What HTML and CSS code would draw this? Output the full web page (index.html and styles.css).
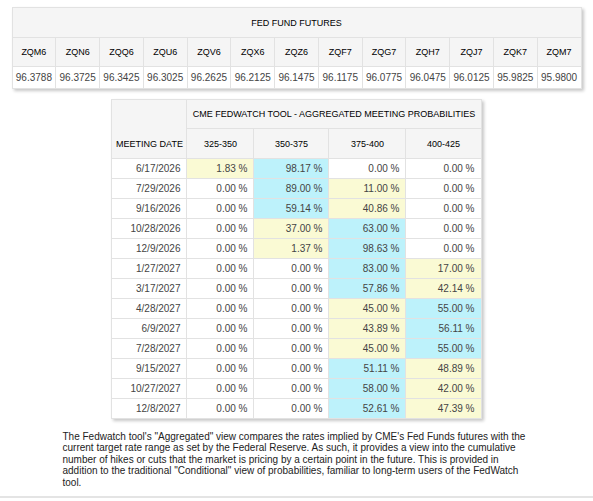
FILE: index.html
```html
<!DOCTYPE html>
<html>
<head>
<meta charset="utf-8">
<link rel="stylesheet" href="styles.css">
</head>
<body>
<div class="page">
  <table class="futures">
    <tr class="title-row"><th colspan="13">FED FUND FUTURES</th></tr>
    <tr class="head-row">
      <th>ZQM6</th><th>ZQN6</th><th>ZQQ6</th><th>ZQU6</th><th>ZQV6</th><th>ZQX6</th><th>ZQZ6</th><th>ZQF7</th><th>ZQG7</th><th>ZQH7</th><th>ZQJ7</th><th>ZQK7</th><th>ZQM7</th>
    </tr>
    <tr class="data-row">
      <td>96.3788</td><td>96.3725</td><td>96.3425</td><td>96.3025</td><td>96.2625</td><td>96.2125</td><td>96.1475</td><td>96.1175</td><td>96.0775</td><td>96.0475</td><td>96.0125</td><td>95.9825</td><td>95.9800</td>
    </tr>
  </table>

  <table class="probs">
    <colgroup>
      <col class="c-date"><col class="c1"><col class="c2"><col class="c3"><col class="c4">
    </colgroup>
    <tr class="title-row">
      <th class="corner" rowspan="2"><span>MEETING DATE</span></th>
      <th colspan="4">CME FEDWATCH TOOL - AGGREGATED MEETING PROBABILITIES</th>
    </tr>
    <tr class="head-row">
      <th>325-350</th><th>350-375</th><th>375-400</th><th>400-425</th>
    </tr>
    <tr><td>6/17/2026</td><td class="y">1.83 %</td><td class="b">98.17 %</td><td>0.00 %</td><td>0.00 %</td></tr>
    <tr><td>7/29/2026</td><td>0.00 %</td><td class="b">89.00 %</td><td class="y">11.00 %</td><td>0.00 %</td></tr>
    <tr><td>9/16/2026</td><td>0.00 %</td><td class="b">59.14 %</td><td class="y">40.86 %</td><td>0.00 %</td></tr>
    <tr><td>10/28/2026</td><td>0.00 %</td><td class="y">37.00 %</td><td class="b">63.00 %</td><td>0.00 %</td></tr>
    <tr><td>12/9/2026</td><td>0.00 %</td><td class="y">1.37 %</td><td class="b">98.63 %</td><td>0.00 %</td></tr>
    <tr><td>1/27/2027</td><td>0.00 %</td><td>0.00 %</td><td class="b">83.00 %</td><td class="y">17.00 %</td></tr>
    <tr><td>3/17/2027</td><td>0.00 %</td><td>0.00 %</td><td class="b">57.86 %</td><td class="y">42.14 %</td></tr>
    <tr><td>4/28/2027</td><td>0.00 %</td><td>0.00 %</td><td class="y">45.00 %</td><td class="b">55.00 %</td></tr>
    <tr><td>6/9/2027</td><td>0.00 %</td><td>0.00 %</td><td class="y">43.89 %</td><td class="b">56.11 %</td></tr>
    <tr><td>7/28/2027</td><td>0.00 %</td><td>0.00 %</td><td class="y">45.00 %</td><td class="b">55.00 %</td></tr>
    <tr><td>9/15/2027</td><td>0.00 %</td><td>0.00 %</td><td class="b">51.11 %</td><td class="y">48.89 %</td></tr>
    <tr><td>10/27/2027</td><td>0.00 %</td><td>0.00 %</td><td class="b">58.00 %</td><td class="y">42.00 %</td></tr>
    <tr><td>12/8/2027</td><td>0.00 %</td><td>0.00 %</td><td class="b">52.61 %</td><td class="y">47.39 %</td></tr>
  </table>

  <p class="note">The Fedwatch tool's "Aggregated" view compares the rates implied by CME's Fed Funds futures with the current target rate range as set by the Federal Reserve. As such, it provides a view into the cumulative number of hikes or cuts that the market is pricing by a certain point in the future. This is provided in addition to the traditional "Conditional" view of probabilities, familiar to long-term users of the FedWatch tool.</p>
</div>
<div class="rule"></div>
</body>
</html>
```

FILE: styles.css
```css
html, body {
  margin: 0;
  padding: 0;
  background: #fff;
}
body {
  font-family: "Liberation Sans", Arial, sans-serif;
  color: #333;
}
.page {
  display: flex;
  flex-direction: column;
  align-items: center;
  padding-top: 7px;
}
table {
  border-collapse: collapse;
  table-layout: fixed;
  box-shadow: 2px 2px 3px rgba(0, 0, 0, 0.22);
  border: 1px solid #dcdcdc;
}
th, td {
  border: 1px solid #e2e2e2;
  padding: 0;
}
th {
  background: #f5f5f5;
  font-weight: normal;
  font-size: 9px;
  color: #000;
}
td {
  font-size: 10px;
  color: #444;
  background: #fff;
}

/* futures table */
.futures {
  width: 570px;
}
.futures .title-row th {
  height: 29px;
}
.futures .head-row th {
  height: 28px;
}
.futures .data-row td {
  height: 21px;
  text-align: center;
}

/* probabilities table */
.probs {
  width: 369px;
  margin-top: 10px;
}
.c-date { width: 75px; }
.c1 { width: 67px; }
.c2 { width: 75px; }
.c3 { width: 77px; }
.c4 { width: 75px; }
.probs .title-row th {
  height: 28px;
}
.probs .head-row th {
  height: 29px;
}
.probs .corner {
  vertical-align: bottom;
  padding-bottom: 9px;
}
.probs td {
  height: 19px;
  text-align: right;
  padding-right: 6px;
}
.probs td.y { background: #fafad4; }
.probs td.b { background: #bdf2fb; }

.note {
  width: 470px;
  margin: 12px 0 0 2px;
  font-size: 10px;
  line-height: 11.4px;
  color: #222;
}
.rule {
  margin-top: 8px;
  height: 0;
  border-top: 2px solid #e4e4e4;
}
```
